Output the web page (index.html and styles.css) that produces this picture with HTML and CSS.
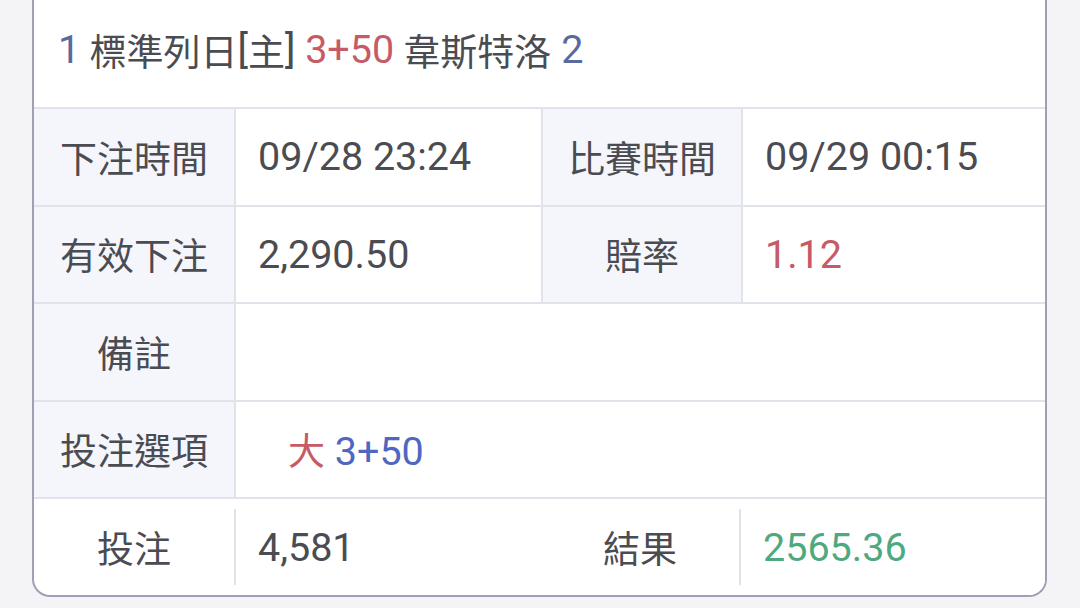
FILE: index.html
```html
<!DOCTYPE html>
<html lang="zh-Hant">
<head>
<meta charset="utf-8">
<title>注單詳情</title>
<link rel="stylesheet" href="styles.css">
</head>
<body>
  <div class="card">
    <div class="card-head">
      <span class="num blue-gray">1</span>&nbsp;標準列日<span class="num">[</span>主<span class="num">]</span><span class="num">&nbsp;</span><span class="num red">3+50</span>&nbsp;韋斯特洛<span class="num">&nbsp;</span><span class="num blue-gray">2</span>
    </div>
    <div class="grid">
      <div class="label">下注時間</div>
      <div class="value">09/28 23:24</div>
      <div class="label">比賽時間</div>
      <div class="value">09/29 00:15</div>

      <div class="label">有效下注</div>
      <div class="value">2,290.50</div>
      <div class="label">賠率</div>
      <div class="value red">1.12</div>

      <div class="label">備註</div>
      <div class="value wide"></div>

      <div class="label">投注選項</div>
      <div class="value wide"><span class="option"><span class="cjk red">大</span> <span class="blue">3+50</span></span></div>
    </div>
    <div class="foot">
      <div class="foot-label">投注</div>
      <div class="value">4,581</div>
      <div class="foot-label">結果</div>
      <div class="value green">2565.36</div>
    </div>
  </div>
</body>
</html>
```

FILE: styles.css
```css
* {
  box-sizing: border-box;
}

html, body {
  margin: 0;
  padding: 0;
}

body {
  width: 1080px;
  height: 608px;
  overflow: hidden;
  background: #f4f4f6;
  font-family: "Roboto", "Noto Sans CJK TC", sans-serif;
  font-size: 37px;
  color: #4b4c52;
}

.card {
  margin: 0 33px 0 32px;
  background: #ffffff;
  border: 2px solid #9fa0b4;
  border-top: 0;
  border-radius: 0 0 18px 18px;
  overflow: hidden;
}

.card-head {
  height: 109px;
  display: flex;
  align-items: center;
  padding: 0 0 8px 24px;
  border-bottom: 2px solid #e2e3ea;
  white-space: nowrap;
}

.num {
  font-size: 39.5px;
}

.cjk {
  font-size: 37px;
}

.grid {
  display: grid;
  grid-template-columns: 200px 305px 198px 1fr;
  grid-auto-rows: 95.5px;
  gap: 2px;
  background: #e2e3ea;
  border-bottom: 2px solid #e2e3ea;
}

.label {
  background: #f5f6fb;
  display: flex;
  align-items: center;
  justify-content: center;
}

.value {
  background: #ffffff;
  display: flex;
  align-items: center;
  padding-left: 22px;
  font-size: 39.5px;
}

.wide {
  grid-column: span 3;
}

.option {
  margin-left: 30px;
}

.foot {
  display: grid;
  grid-template-columns: 202px 305px 200px 1fr;
  height: 96px;
  align-items: center;
}

.foot .value {
  height: 100%;
}

.foot-label {
  height: 76px;
  display: flex;
  align-items: center;
  justify-content: center;
  border-right: 2px solid #e2e3ea;
}

.red {
  color: #c65b66;
}

.blue {
  color: #4f66c2;
}

.blue-gray {
  color: #5a6a9f;
}

.green {
  color: #4fa97f;
}
```
